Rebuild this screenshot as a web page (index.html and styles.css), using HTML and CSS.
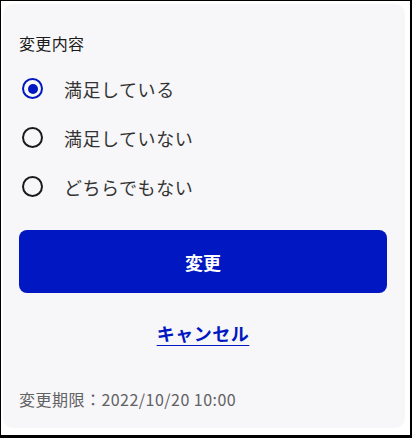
FILE: index.html
```html
<!DOCTYPE html>
<html lang="ja">
<head>
  <meta charset="UTF-8" />
  <meta name="viewport" content="width=device-width, initial-scale=1.0"/>
  <title>変更内容</title>
  <link rel="stylesheet" href="styles.css">
</head>
<body>
  <div class="frame">
    <div class="card">
      <div class="title">変更内容</div>

      <div class="options">
        <label class="option">
          <input type="radio" name="choice" class="radio" checked>
          <span>満足している</span>
        </label>
        <label class="option">
          <input type="radio" name="choice" class="radio">
          <span>満足していない</span>
        </label>
        <label class="option">
          <input type="radio" name="choice" class="radio">
          <span>どちらでもない</span>
        </label>
      </div>

      <button class="submit">変更</button>

      <div class="cancel-wrap">
        <a href="#" class="cancel">キャンセル</a>
      </div>

      <div class="deadline">変更期限：2022/10/20 10:00</div>
    </div>
  </div>
</body>
</html>
```

FILE: styles.css
```css
html, body {
  margin: 0;
  padding: 0;
  background: #fff;
}
body {
  font-family: "Noto Sans CJK JP", "Noto Sans", sans-serif;
  color: #1a1a1a;
}
.frame {
  width: 412px;
  height: 438px;
  box-sizing: border-box;
  border-style: solid;
  border-color: #000;
  border-width: 1px 2px 3px 1px;
  padding: 3px 5px 7px 2px;
}
.card {
  height: 100%;
  box-sizing: border-box;
  background: #f7f7f9;
  border-radius: 10px;
  padding: 27px 18px 0 16px;
}
.title {
  font-size: 16px;
  line-height: 24px;
  font-weight: 400;
  color: #1a1a1a;
  letter-spacing: 0.02em;
}
.options {
  margin-top: 9px;
}
.option {
  display: flex;
  align-items: center;
  height: 49px;
  font-size: 18px;
  letter-spacing: 0.03em;
  color: #333;
  cursor: pointer;
}
.radio {
  appearance: none;
  -webkit-appearance: none;
  margin: 0 21px 0 3px;
  width: 21px;
  height: 21px;
  box-sizing: border-box;
  border: 2px solid #1a1a1a;
  border-radius: 50%;
  display: grid;
  place-items: center;
}
.radio:checked {
  border-color: #0017c1;
}
.radio:checked::after {
  content: "";
  width: 10px;
  height: 10px;
  border-radius: 50%;
  background: #0017c1;
}
.submit {
  display: block;
  width: 100%;
  height: 63px;
  margin-top: 19px;
  border: none;
  border-radius: 8px;
  background: #0017c1;
  color: #fff;
  font-family: inherit;
  font-size: 18px;
  font-weight: 700;
}
.cancel-wrap {
  margin-top: 26px;
  text-align: center;
  line-height: 28px;
}
.cancel {
  font-size: 18px;
  font-weight: 700;
  letter-spacing: 0.03em;
  color: #0017c1;
  text-decoration: underline;
  text-decoration-thickness: 1px;
  text-underline-offset: 4px;
}
.deadline {
  margin-top: 39px;
  font-size: 16px;
  line-height: 24px;
  letter-spacing: 0.03em;
  color: #626264;
}
```
